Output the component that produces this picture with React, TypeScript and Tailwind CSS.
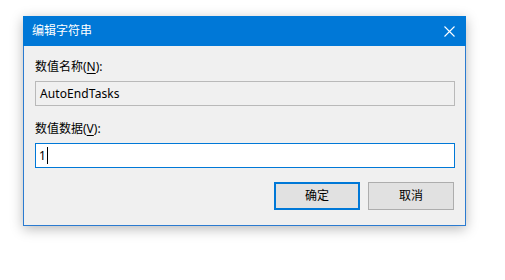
import React from 'react';

const font = { fontFamily: '"Noto Sans", "Noto Sans CJK SC", sans-serif' };

export default function App() {
  return (
    <div className="w-[505px] h-[280px] bg-white pt-[16px] pl-[23px]" style={font}>
      <div className="w-[443px] h-[210px] flex flex-col shadow-[0_3px_12px_rgba(0,0,0,0.28)]">
        {/* title bar */}
        <div className="h-[30px] bg-[#0078d7] flex items-center justify-between pl-[9px] pr-[10px]">
          <span className="text-white text-[12px] leading-none">编辑字符串</span>
          <svg width="11" height="11" viewBox="0 0 11 11" className="mr-[1px]">
            <path d="M0.5 0.5 L10.5 10.5 M10.5 0.5 L0.5 10.5" stroke="#ffffff" strokeWidth="1.1" fill="none" />
          </svg>
        </div>

        {/* body */}
        <div className="flex-1 bg-[#f0f0f0] border border-t-0 border-[#2b7bd0] pl-[11px] pr-[10px] pt-[12px] flex flex-col text-[12px] text-black">
          <label className="leading-[17px]">
            数值名称(<span className="underline underline-offset-2">N</span>):
          </label>
          <div className="mt-[6px] h-[25px] border border-[#b9b9b9] bg-[#f0f0f0] flex items-center pl-[4px]">
            <span className="text-[12px] tracking-[0.1px]">AutoEndTasks</span>
          </div>

          <label className="mt-[14px] leading-[17px]">
            数值数据(<span className="underline underline-offset-2">V</span>):
          </label>
          <div className="mt-[6px] h-[25px] border border-[#0078d7] bg-white flex items-center pl-[3px]">
            <span className="text-[12px]">1</span>
            <span className="ml-[1px] w-[1px] h-[17px] bg-black" />
          </div>

          <div className="mt-[14px] flex justify-end gap-[8px] pr-[1px]">
            <button className="w-[86px] h-[28px] bg-[#e1e1e1] border-2 border-[#0078d7] text-[12px] text-black">
              确定
            </button>
            <button className="w-[86px] h-[28px] bg-[#e1e1e1] border border-[#adadad] text-[12px] text-black">
              取消
            </button>
          </div>
        </div>
      </div>
    </div>
  );
}
